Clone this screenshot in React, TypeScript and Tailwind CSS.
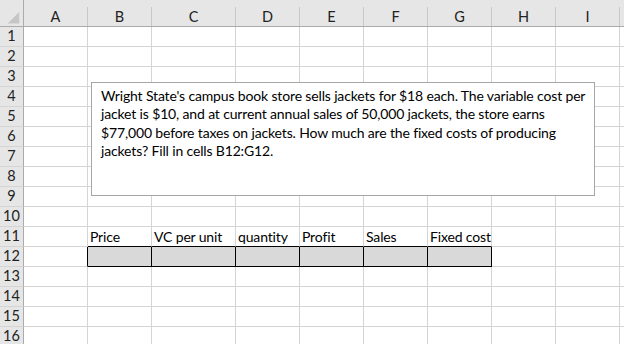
import React from 'react';

const FONT = "font-['Lato','Liberation_Sans',sans-serif]";

const columns = [
  { key: 'A', width: 'w-[64px]' },
  { key: 'B', width: 'w-[64px]' },
  { key: 'C', width: 'w-[84px]' },
  { key: 'D', width: 'w-[64px]' },
  { key: 'E', width: 'w-[64px]' },
  { key: 'F', width: 'w-[64px]' },
  { key: 'G', width: 'w-[64px]' },
  { key: 'H', width: 'w-[64px]' },
  { key: 'I', width: 'w-[64px]' },
  { key: '', width: 'w-[64px]' },
];

const labels: Record<string, string> = {
  B: 'Price',
  C: 'VC per unit',
  D: 'quantity',
  E: 'Profit',
  F: 'Sales',
  G: 'Fixed cost',
};

const boxed = ['B', 'C', 'D', 'E', 'F', 'G'];

// cell borders: light grid by default, black box round B12:G12
const cellClass = (row: number, col: string) => {
  const inBox = boxed.includes(col);
  const right =
    (row === 12 && (inBox || col === 'A')) ? 'border-r-black' : 'border-r-[#d4d4d4]';
  const bottom =
    ((row === 11 || row === 12) && inBox) ? 'border-b-black' : 'border-b-[#d4d4d4]';
  const fill = row === 12 && inBox ? 'bg-[#d9d9d9]' : '';
  return `${right} ${bottom} ${fill}`;
};

const HeaderRow: React.FC = () => (
  <div className="flex h-[27px] shrink-0 bg-[#e6e6e6] border-b border-b-[#ababab]">
    <div className="w-[24px] shrink-0 flex items-end justify-end border-r border-r-[#ababab]">
      <svg width="24" height="26" viewBox="0 0 24 26" className="block">
        <polygon points="20,12 20,24 8,24" fill="#c6c6c6" />
      </svg>
    </div>
    {columns.map((c, i) => (
      <div
        key={i}
        className={`${c.width} shrink-0 self-end h-[19px] flex items-center justify-center border-r border-r-[#c8c8c8] text-[14.5px] text-[#222]`}
      >
        {c.key}
      </div>
    ))}
  </div>
);

const SheetRow: React.FC<{ row: number }> = ({ row }) => (
  <div className="flex h-[20px] shrink-0">
    <div className="w-[24px] shrink-0 flex items-center justify-center bg-[#e6e6e6] border-r border-b border-r-[#ababab] border-b-[#d4d4d4] text-[14.5px] text-[#222] leading-none">
      {row}
    </div>
    {columns.map((c, i) => (
      <div
        key={i}
        className={`${c.width} shrink-0 border-r border-b ${cellClass(row, c.key)} flex items-end pl-[2px] pb-[1px] whitespace-nowrap text-[14px] tracking-[-0.15px] leading-[17px] text-black`}
      >
        {row === 11 ? labels[c.key] ?? '' : ''}
      </div>
    ))}
  </div>
);

export default function App() {
  const rows = Array.from({ length: 16 }, (_, i) => i + 1);
  return (
    <div className={`relative w-[624px] h-[344px] overflow-hidden bg-white ${FONT}`}>
      <div className="flex flex-col">
        <HeaderRow />
        {rows.map((r) => (
          <SheetRow key={r} row={r} />
        ))}
      </div>

      {/* floating text box */}
      <div className="absolute left-[91px] top-[82px] w-[504px] h-[114px] bg-white border border-[#a6a6a6] pl-[9px] pt-[4px] text-[14px] tracking-[-0.15px] leading-[18.3px] text-black whitespace-nowrap">
        Wright State's campus book store sells jackets for $18 each. The variable cost per
        <br />
        jacket is $10, and at current annual sales of 50,000 jackets, the store earns
        <br />
        $77,000 before taxes on jackets. How much are the fixed costs of producing
        <br />
        jackets? Fill in cells B12:G12.
      </div>
    </div>
  );
}
